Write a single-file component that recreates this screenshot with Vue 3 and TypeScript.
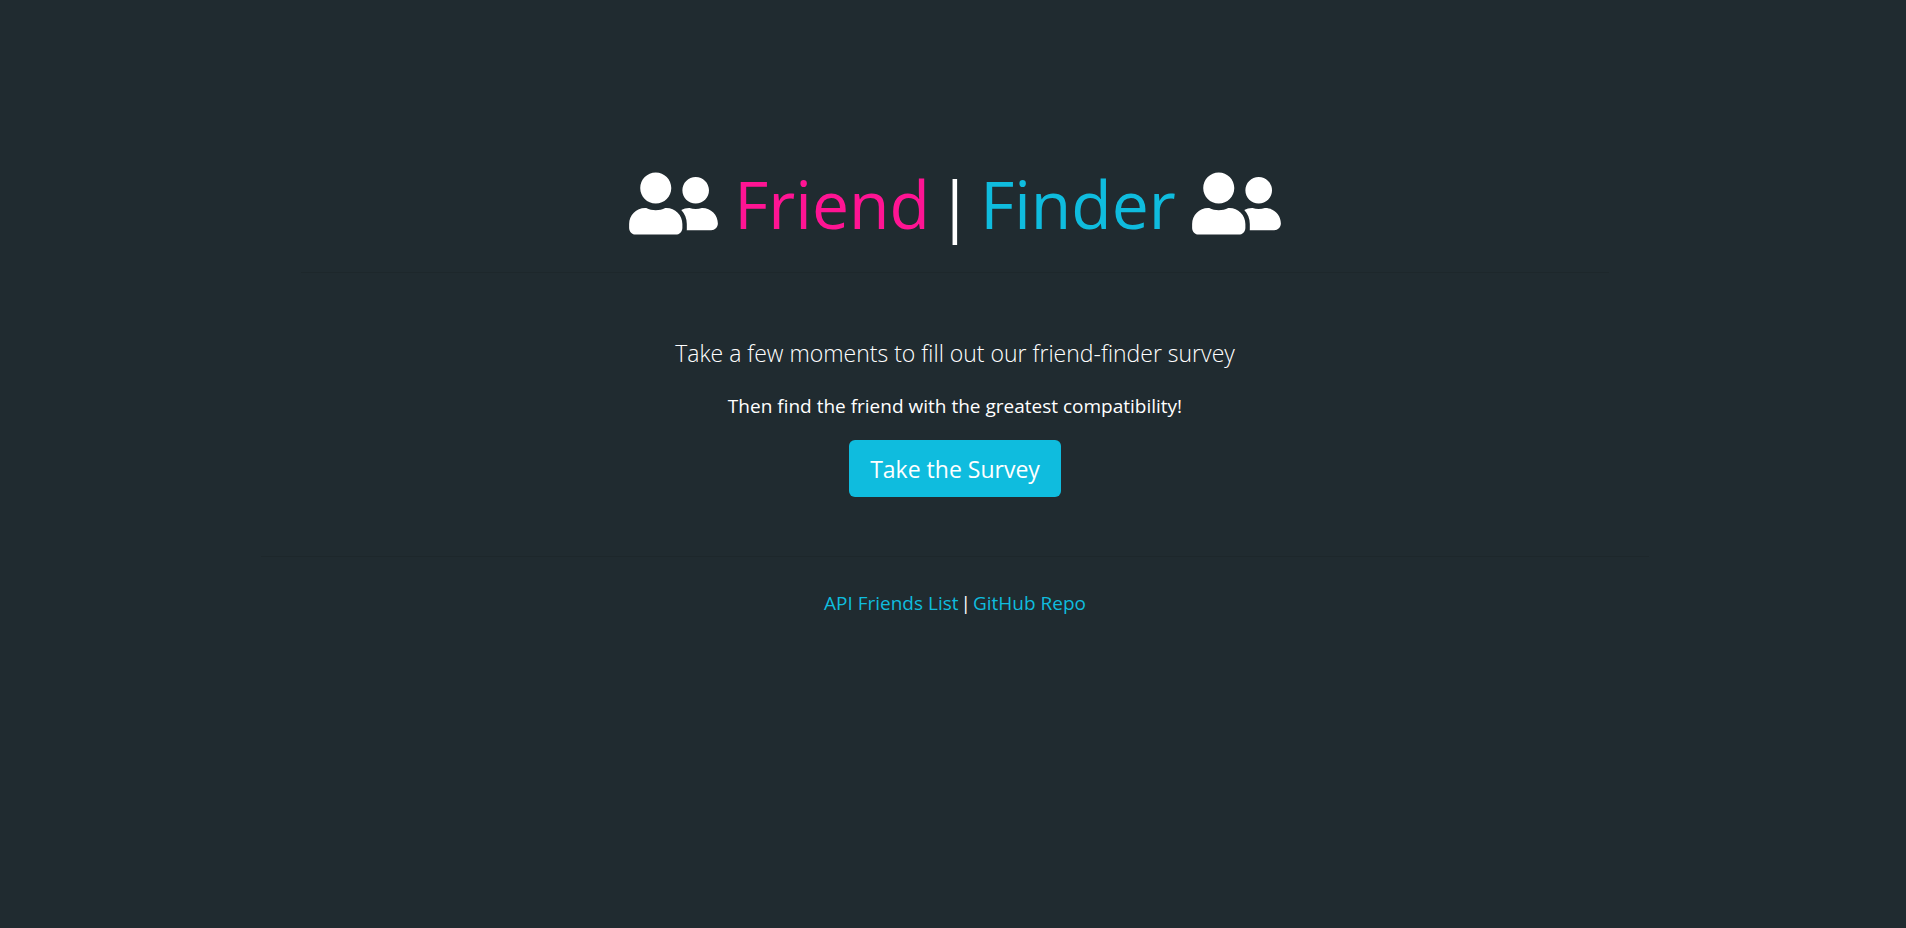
<script setup lang="ts">
const friendsIcon =
  'M192 256c61.9 0 112-50.1 112-112S253.9 32 192 32 80 82.1 80 144s50.1 112 112 112zm76.8 32h-8.3c-20.8 10-43.9 16-68.5 16s-47.6-6-68.5-16h-8.3C51.6 288 0 339.6 0 403.2V432c0 26.5 21.5 48 48 48h288c26.5 0 48-21.5 48-48v-28.8c0-63.6-51.6-115.2-115.2-115.2zM480 256c53 0 96-43 96-96s-43-96-96-96-96 43-96 96 43 96 96 96zm48 32h-3.8c-13.9 4.8-28.6 8-44.2 8s-30.3-3.2-44.2-8H432c-20.4 0-39.2 5.9-55.7 15.4 24.4 26.3 39.7 61.2 39.7 99.8v38.4c0 2.2-.5 4.3-.6 6.4H592c26.5 0 48-21.5 48-48 0-61.9-50.1-112-112-112z'
</script>

<template>
  <main class="page">
    <div class="container">
      <header class="hero">
        <h1 class="title">
          <svg class="icon" viewBox="0 0 640 512" aria-hidden="true"><path :d="friendsIcon" /></svg>
          <span class="words">
            <span class="friend">Friend</span>
            <span>|</span>
            <span class="finder">Finder</span>
          </span>
          <svg class="icon" viewBox="0 0 640 512" aria-hidden="true"><path :d="friendsIcon" /></svg>
        </h1>
        <hr class="rule" />
      </header>
      <p class="lead">Take a few moments to fill out our friend-finder survey</p>
      <p class="sub">Then find the friend with the greatest compatibility!</p>
      <a class="button" href="#survey">Take the Survey</a>
      <hr class="rule footer-rule" />
      <footer class="links">
        <a href="#friends">API Friends List</a>
        <span>|</span>
        <a href="#repo">GitHub Repo</a>
      </footer>
    </div>
  </main>
</template>

<style>
body {
  margin: 0;
  background: #202b30;
}
</style>

<style scoped>
.page {
  box-sizing: border-box;
  min-height: 100vh;
  padding: 152px 12px 48px 16px;
  background: #202b30;
  color: #fff;
  font-family: "Open Sans", "Noto Sans", sans-serif;
  font-size: 19px;
  line-height: 28px;
}
.container {
  display: flex;
  flex-direction: column;
  align-items: center;
  max-width: 1388px;
  margin: 0 auto;
  text-align: center;
}
.hero {
  box-sizing: border-box;
  width: 100%;
  padding: 0 40px;
  margin-bottom: 62px;
}
.title {
  display: flex;
  flex-wrap: wrap;
  align-items: center;
  justify-content: center;
  column-gap: 16px;
  margin: 0 0 18px;
  font-size: 66px;
  font-weight: 400;
  line-height: 102px;
}
.words {
  display: flex;
  column-gap: 7px;
}
.icon {
  width: 89px;
  height: 71px;
  fill: #fff;
}
.friend {
  color: #ff1493;
}
.finder {
  color: #0fbcde;
}
.lead {
  margin: 0 0 21px;
  font-size: 23px;
  font-weight: 300;
  line-height: 36px;
}
.sub {
  margin: 0 0 20px;
}
.button {
  padding: 11px 21px 10px;
  border-radius: 6px;
  background: #0fbcde;
  color: #fff;
  font-size: 23px;
  line-height: 36px;
  text-decoration: none;
}
.rule {
  width: 100%;
  height: 1px;
  margin: 0;
  border: 0;
  background: #1d272b;
}
.footer-rule {
  margin: 59px 0 32px;
}
.links {
  display: flex;
  column-gap: 2px;
}
.links a {
  color: #0fbcde;
  text-decoration: none;
}
</style>
